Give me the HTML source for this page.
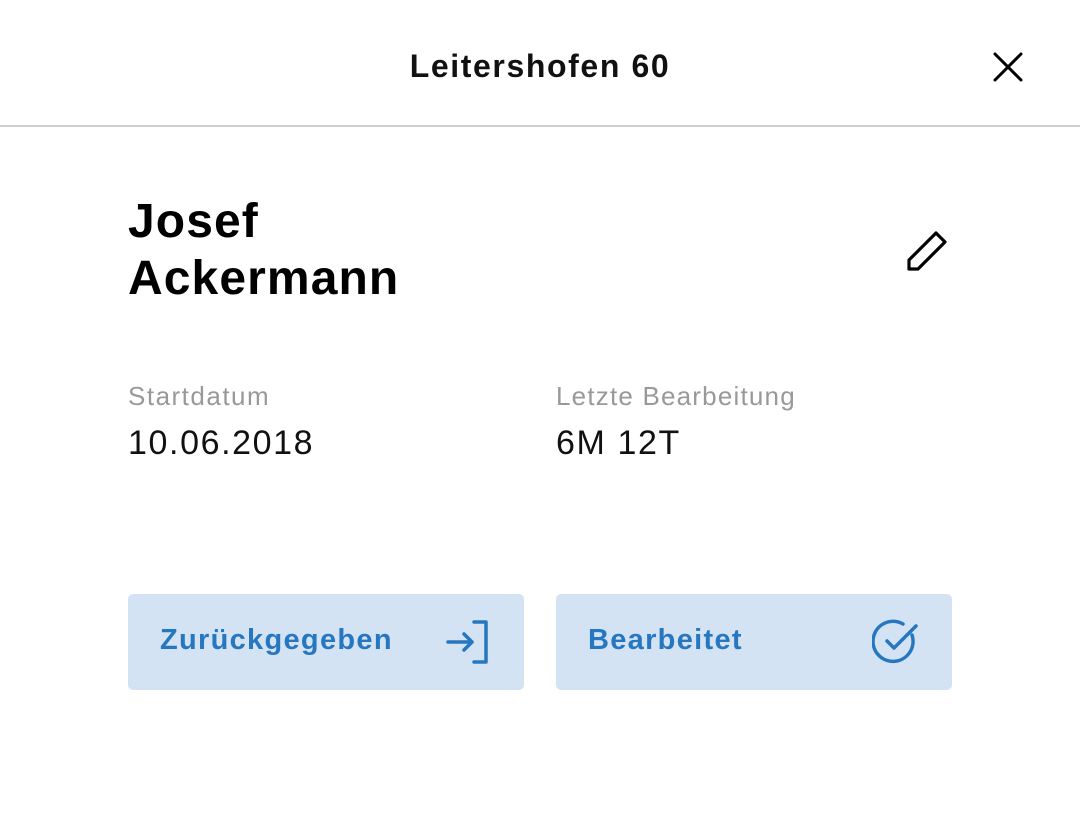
<!DOCTYPE html><html><head><meta charset="utf-8"><style>
body{margin:0;width:1080px;height:818px;background:#fff;font-family:"Liberation Sans",Roboto,sans-serif;position:relative;overflow:hidden}
.a{position:absolute}
.btn{position:absolute;top:594px;width:396px;height:96px;background:#d3e3f3;border-radius:5px}
.btn span{position:absolute;left:32px;top:30px;font-size:29px;font-weight:bold;color:#2677c0;letter-spacing:1.3px}
</style></head><body>
<div class="a" style="top:48px;left:0;width:1080px;text-align:center;font-size:32px;font-weight:bold;color:#111;letter-spacing:1.6px">Leitershofen 60</div>
<svg class="a" style="left:992px;top:51px" width="32" height="32" viewBox="0 0 32 32"><path d="M3 3L29 29M29 3L3 29" stroke="#000" stroke-width="3" stroke-linecap="round"/></svg>
<div class="a" style="top:125px;left:0;width:1080px;height:2px;background:#cfcfcf"></div>
<div class="a" style="top:193px;left:128px;font-size:48px;font-weight:bold;line-height:57px;color:#000;letter-spacing:1.1px">Josef<br>Ackermann</div>
<svg class="a" style="left:906px;top:228px" width="44" height="44" viewBox="0 0 44 44"><path d="M3 41V32L30 5L39 14L12 41Z" fill="none" stroke="#000" stroke-width="3.2" stroke-linejoin="round"/></svg>
<div class="a" style="top:381px;left:128px;font-size:26px;color:#999;letter-spacing:1.5px">Startdatum</div>
<div class="a" style="top:424px;left:128px;font-size:34px;color:#111;letter-spacing:1.6px">10.06.2018</div>
<div class="a" style="top:381px;left:556px;font-size:26px;color:#999;letter-spacing:1.2px">Letzte Bearbeitung</div>
<div class="a" style="top:424px;left:556px;font-size:34px;color:#111;letter-spacing:1.6px">6M 12T</div>
<div class="btn" style="left:128px"><span>Zurückgegeben</span>
<svg class="a" style="left:318px;top:26px" width="44" height="44" viewBox="0 0 44 44"><path d="M28 2H40V42H28M2 22H26M18 14L26 22L18 30" fill="none" stroke="#2677c0" stroke-width="3.5" stroke-linecap="round" stroke-linejoin="round"/></svg></div>
<div class="btn" style="left:556px"><span>Bearbeitet</span>
<svg class="a" style="left:316px;top:24px" width="50" height="48" viewBox="0 0 50 48"><path d="M40 17A20 20 0 1 1 31 6" fill="none" stroke="#2677c0" stroke-width="3.5" stroke-linecap="round"/><path d="M15 23L22 30L44 8" fill="none" stroke="#2677c0" stroke-width="3.5" stroke-linecap="round" stroke-linejoin="round"/></svg></div>
</body></html>
